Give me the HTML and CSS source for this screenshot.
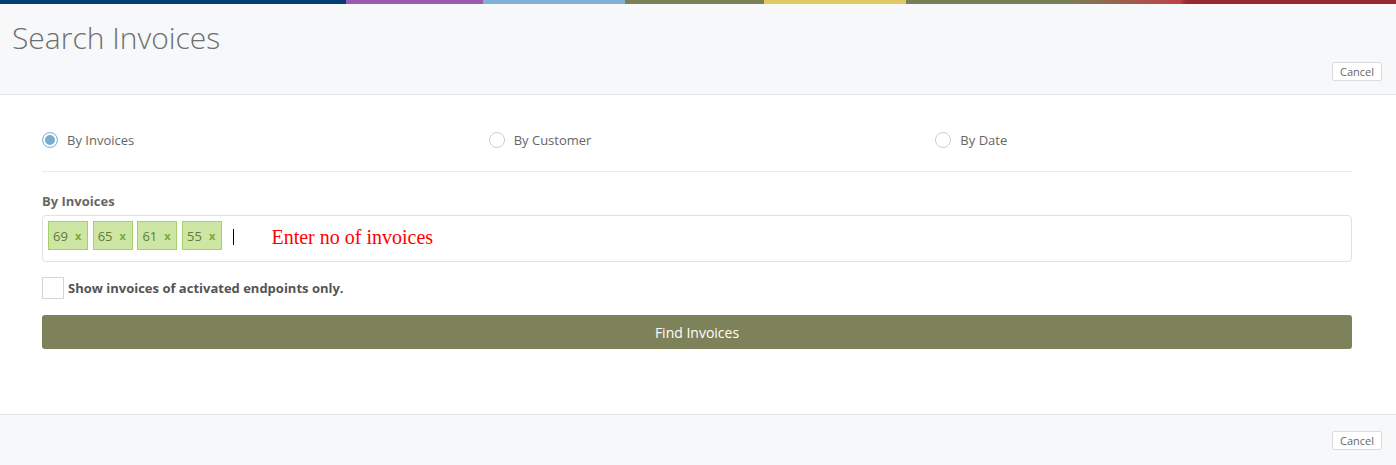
FILE: index.html
```html
<!DOCTYPE html>
<html lang="en">
<head>
    <meta charset="UTF-8">
    <meta name="viewport" content="width=device-width, initial-scale=1.0">
    <title>Search Invoices</title>
    <link rel="stylesheet" href="styles.css">
</head>
<body>

    <div class="topbar"></div>

    <!-- header -->
    <div class="modalHeader">
        <h2>Search Invoices</h2>
        <div class="actions">
            <button class="btnCancel">Cancel</button>
        </div>
    </div>

    <!-- body -->
    <div class="modalBody">
        <div class="radioRow">
            <label class="radioCol"><span class="radio checked"></span>By Invoices</label>
            <label class="radioCol"><span class="radio"></span>By Customer</label>
            <label class="radioCol"><span class="radio"></span>By Date</label>
        </div>

        <div class="divider"></div>

        <div class="fieldLabel">By Invoices</div>
        <div class="tagInput">
            <span class="tag">69<b>x</b></span>
            <span class="tag">65<b>x</b></span>
            <span class="tag">61<b>x</b></span>
            <span class="tag">55<b>x</b></span>
            <span class="caret"></span>
            <span class="hint">Enter no of invoices</span>
        </div>

        <label class="checkRow">
            <span class="checkbox"></span>
            Show invoices of activated endpoints only.
        </label>

        <button class="btnFind">Find Invoices</button>
    </div>

    <!-- footer -->
    <div class="modalFooter">
        <button class="btnCancel">Cancel</button>
    </div>

</body>
</html>
```

FILE: styles.css
```css
body{
    margin: 0;
    font-family: "Open Sans", "Liberation Sans", sans-serif;
    color: #666;
    background: #fff;
}

.topbar{
    height: 4px;
    background: linear-gradient(to right,
        #003e74 0, #003e74 346px,
        #9b59b0 346px, #9b59b0 483px,
        #7eb1d5 483px, #7eb1d5 625px,
        #7b8058 625px, #7b8058 764px,
        #e2c964 764px, #e2c964 906px,
        #777f55 906px, #777f55 1066px,
        #c0404a 1180px, #97292f 1186px, #97292f 100%);
}

.modalHeader{
    height: 91px;
    box-sizing: border-box;
    padding: 17px 14px 0 12px;
    background-color: #f7f8fa;
    border-bottom: 1px solid #e3e4e6;
}

.modalHeader h2{
    margin: 0;
    font-size: 30px;
    line-height: 33px;
    font-weight: 300;
    color: #6f6f6f;
}

.actions{
    display: flex;
    justify-content: flex-end;
    margin-top: 8px;
}

.btnCancel{
    height: 19px;
    padding: 0 7px;
    font-family: inherit;
    font-size: 11px;
    line-height: 17px;
    color: #666;
    background: #fff;
    border: 1px solid #dcdcdc;
    border-radius: 2px;
    cursor: pointer;
}

.modalBody{
    padding: 30px 44px 65px 42px;
}

.radioRow{
    display: flex;
    height: 30px;
    margin: 0 -15px;
}

.radioCol{
    flex: 1;
    display: flex;
    align-items: center;
    padding: 0 15px;
    font-size: 13px;
    color: #666;
}

.radio{
    width: 14px;
    height: 14px;
    margin-right: 9px;
    border: 1px solid #ccc;
    border-radius: 50%;
    background: #fff;
}

.radio.checked{
    border-color: #8dbbdb;
    background: #79acd3;
    box-shadow: inset 0 0 0 2px #fff;
}

.divider{
    height: 1px;
    margin-top: 16px;
    background: #ebebeb;
}

.fieldLabel{
    margin-top: 20px;
    margin-bottom: 5px;
    font-size: 13px;
    line-height: 18px;
    font-weight: bold;
    color: #666;
}

.tagInput{
    display: flex;
    align-items: center;
    gap: 4.7px;
    height: 47px;
    box-sizing: border-box;
    padding: 0 5px 6px 5px;
    border: 1px solid #e1e1e1;
    border-radius: 4px;
}

.tag{
    display: flex;
    align-items: center;
    width: 40px;
    height: 29px;
    box-sizing: border-box;
    padding: 0 0 0 4px;
    font-size: 13px;
    color: #5f7a3c;
    background: #cde6a4;
    border: 1px solid #a4d26a;
}

.tag b{
    margin-left: 7px;
    font-size: 11px;
    color: #78a842;
}

.caret{
    width: 1px;
    height: 16px;
    margin-left: 6px;
    margin-top: 2px;
    background: #000;
}

.hint{
    margin-left: 33px;
    padding-top: 4px;
    font-family: "Liberation Serif", serif;
    font-size: 20px;
    color: #f00;
}

.checkRow{
    display: flex;
    align-items: center;
    margin-top: 15px;
    font-size: 13px;
    font-weight: bold;
    color: #555;
}

.checkbox{
    width: 20px;
    height: 20px;
    margin-right: 4px;
    border: 1px solid #d4d4d4;
    background: #fff;
}

.btnFind{
    display: block;
    width: 100%;
    height: 34px;
    margin-top: 16px;
    font-family: inherit;
    font-size: 14px;
    color: #fff;
    background-color: #7e825a;
    border: 0;
    border-radius: 3px;
    cursor: pointer;
}

.modalFooter{
    display: flex;
    justify-content: flex-end;
    height: 51px;
    box-sizing: border-box;
    padding: 16px 14px 0 0;
    background-color: #f7f8fa;
    border-top: 1px solid #e3e4e6;
}
```
